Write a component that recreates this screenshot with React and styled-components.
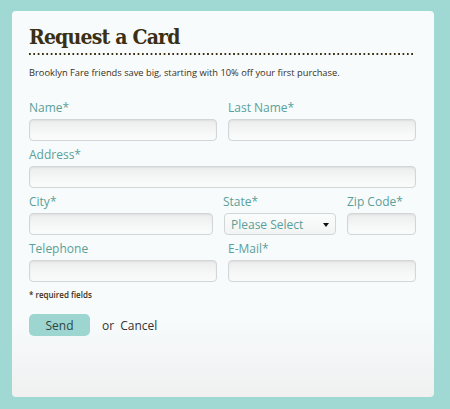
import React from "react";
import styled, { createGlobalStyle } from "styled-components";

const Global = createGlobalStyle`
  html, body { margin: 0; padding: 0; }
  body {
    background: #a0d9d3;
    font-family: "Open Sans", "DejaVu Sans", sans-serif;
  }
`;

const Page = styled.div`
  width: 450px;
  height: 409px;
  padding: 11px 16px 12px 12px;
  box-sizing: border-box;
`;

const Card = styled.div`
  height: 386px;
  box-sizing: border-box;
  border-radius: 4px;
  padding: 14px 18px 0 17px;
  background: linear-gradient(to bottom, #f7fbfc 0%, #f7fbfc 80%, #f0f0f0 100%);
`;

const Title = styled.h1`
  margin: 0;
  font-family: "DejaVu Serif", "Liberation Serif", serif;
  font-weight: bold;
  font-stretch: condensed;
  font-size: 21px;
  letter-spacing: -0.8px;
  line-height: 24px;
  color: #3b2f14;
  padding-bottom: 4px;
`;

const Dots = styled.div`
  height: 2px;
  width: 384px;
  background-image: radial-gradient(circle at 1px 1px, #3b2f14 0.9px, transparent 1.2px);
  background-size: 4.35px 2px;
  background-repeat: repeat-x;
`;

const Intro = styled.p`
  margin: 12px 0 0;
  font-size: 9.3px;
  line-height: 12px;
  color: #3a3020;
`;

const Form = styled.form`
  margin-top: 21px;
  display: flex;
  flex-direction: column;
  gap: 6px;
`;

const Row = styled.div`
  display: grid;
  grid-template-columns: ${(p) => p.$cols};
  column-gap: ${(p) => p.$gap || "11px"};
`;

const Field = styled.div`
  display: flex;
  flex-direction: column;
`;

const Label = styled.label`
  font-size: 12px;
  line-height: 16px;
  color: #5a9f99;
  margin-bottom: 3px;
  margin-left: ${(p) => p.$shift || "0"};
`;

const Input = styled.input`
  height: 22px;
  box-sizing: border-box;
  border: 1px solid #d3d6d6;
  border-radius: 4px;
  background: linear-gradient(to bottom, #ececec 0%, #f6f7f7 60%, #fafbfb 100%);
  box-shadow: inset 0 1px 2px rgba(0, 0, 0, 0.06);
  outline: none;
  margin: 0;
  padding: 0 6px;
`;

const SelectBox = styled.div`
  height: 22px;
  box-sizing: border-box;
  border: 1px solid #d3d6d6;
  border-radius: 4px;
  background: linear-gradient(to bottom, #fbfcfc 0%, #f2f4f4 100%);
  display: flex;
  align-items: center;
  justify-content: space-between;
  padding: 0 6px 0 6px;
  font-size: 12px;
  color: #5a9f99;
`;

const Arrow = styled.span`
  width: 0;
  height: 0;
  border-left: 3.5px solid transparent;
  border-right: 3.5px solid transparent;
  border-top: 4px solid #111;
  margin-top: 1px;
`;

const Note = styled.div`
  margin-top: 7px;
  font-size: 8px;
  line-height: 12px;
  font-weight: 600;
  color: #3a3020;
`;

const Actions = styled.div`
  margin-top: 13px;
  display: flex;
  align-items: center;
`;

const SendButton = styled.button`
  width: 61px;
  height: 22px;
  border: none;
  border-radius: 5px;
  background: #9dd6d0;
  color: #2f4543;
  font-family: "Open Sans", sans-serif;
  font-size: 12px;
  padding: 0;
  margin: 0;
`;

const Or = styled.span`
  margin-left: 12px;
  font-size: 12px;
  color: #333;
  word-spacing: 3px;
`;

export default function App() {
  return (
    <>
      <Global />
      <Page>
        <Card>
          <Title>Request a Card</Title>
          <Dots />
          <Intro>Brooklyn Fare friends save big, starting with 10% off your first purchase.</Intro>
          <Form>
            <Row $cols="188px 188px">
              <Field>
                <Label>Name*</Label>
                <Input />
              </Field>
              <Field>
                <Label>Last Name*</Label>
                <Input />
              </Field>
            </Row>
            <Row $cols="387px">
              <Field>
                <Label>Address*</Label>
                <Input />
              </Field>
            </Row>
            <Row $cols="184px 112px 69px" $gap="11px">
              <Field>
                <Label>City*</Label>
                <Input />
              </Field>
              <Field>
                <Label $shift="-1px">State*</Label>
                <SelectBox>
                  <span>Please Select</span>
                  <Arrow />
                </SelectBox>
              </Field>
              <Field>
                <Label>Zip Code*</Label>
                <Input />
              </Field>
            </Row>
            <Row $cols="188px 188px">
              <Field>
                <Label>Telephone</Label>
                <Input />
              </Field>
              <Field>
                <Label>E-Mail*</Label>
                <Input />
              </Field>
            </Row>
          </Form>
          <Note>* required fields</Note>
          <Actions>
            <SendButton type="button">Send</SendButton>
            <Or>or Cancel</Or>
          </Actions>
        </Card>
      </Page>
    </>
  );
}
